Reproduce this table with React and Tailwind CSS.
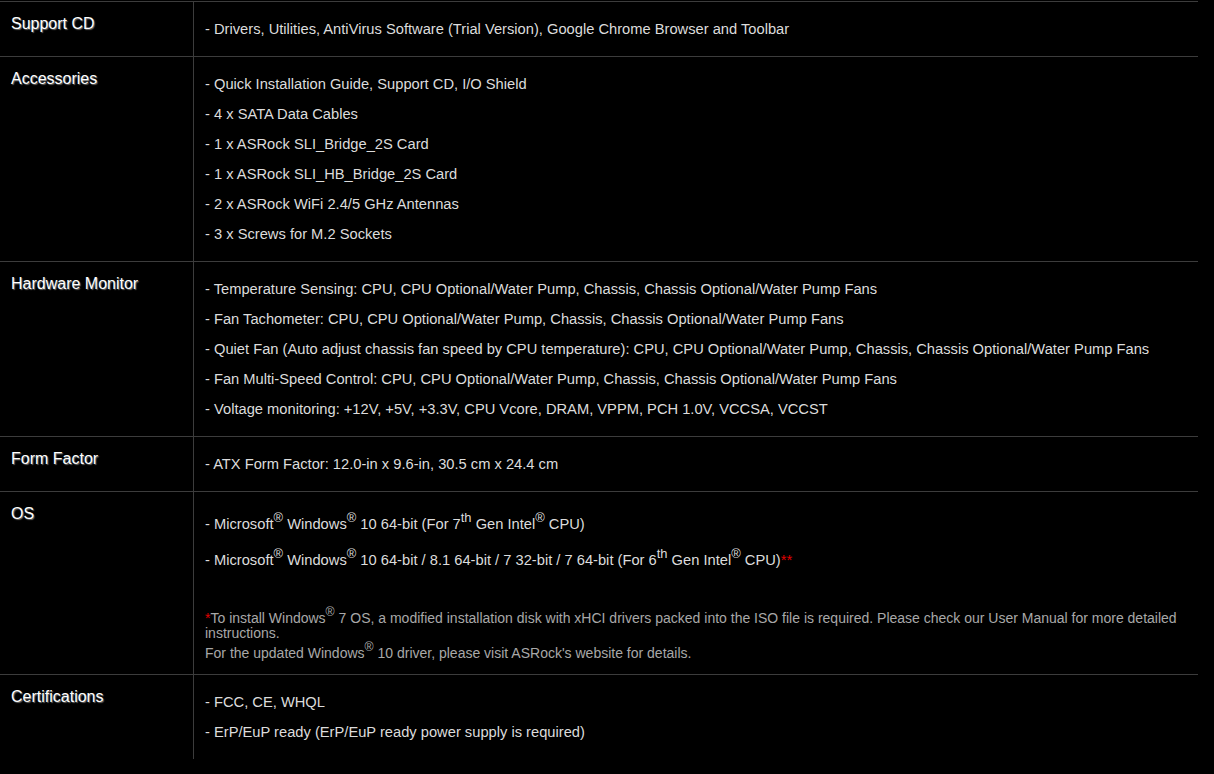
const specs = [
  {
    label: "Support CD",
    items: [
      "- Drivers, Utilities, AntiVirus Software (Trial Version), Google Chrome Browser and Toolbar",
    ],
  },
  {
    label: "Accessories",
    items: [
      "- Quick Installation Guide, Support CD, I/O Shield",
      "- 4 x SATA Data Cables",
      "- 1 x ASRock SLI_Bridge_2S Card",
      "- 1 x ASRock SLI_HB_Bridge_2S Card",
      "- 2 x ASRock WiFi 2.4/5 GHz Antennas",
      "- 3 x Screws for M.2 Sockets",
    ],
  },
  {
    label: "Hardware Monitor",
    items: [
      "- Temperature Sensing: CPU, CPU Optional/Water Pump, Chassis, Chassis Optional/Water Pump Fans",
      "- Fan Tachometer: CPU, CPU Optional/Water Pump, Chassis, Chassis Optional/Water Pump Fans",
      "- Quiet Fan (Auto adjust chassis fan speed by CPU temperature): CPU, CPU Optional/Water Pump, Chassis, Chassis Optional/Water Pump Fans",
      "- Fan Multi-Speed Control: CPU, CPU Optional/Water Pump, Chassis, Chassis Optional/Water Pump Fans",
      "- Voltage monitoring: +12V, +5V, +3.3V, CPU Vcore, DRAM, VPPM, PCH 1.0V, VCCSA, VCCST",
    ],
  },
  {
    label: "Form Factor",
    items: ["- ATX Form Factor: 12.0-in x 9.6-in, 30.5 cm x 24.4 cm"],
  },
];

function Sup({ children }) {
  return <sup className="text-[0.88em] top-[-0.55em]">{children}</sup>;
}

function Row({ label, children }) {
  return (
    <div className="grid grid-cols-[193px_1fr] border-t border-[#3c3c3c]">
      <div className="pt-[12px] pl-[11px] text-[16px] leading-[20px] text-white [text-shadow:1px_1px_1px_#6a6a6a]">
        {label}
      </div>
      <div className="border-l border-[#3c3c3c] pl-[11px] pr-3">{children}</div>
    </div>
  );
}

function Items({ items }) {
  return (
    <div className="pt-[12px] pb-[12px]">
      {items.map((t) => (
        <div key={t} className="leading-[30px]">
          {t}
        </div>
      ))}
    </div>
  );
}

export default function App() {
  return (
    <div className="min-h-screen bg-black pt-[1px] font-['Liberation_Sans',Arial,sans-serif] text-[14.7px] text-[#dcdcdc]">
      <div className="w-[1198px]">
        {specs.map((s) => (
          <Row key={s.label} label={s.label}>
            <Items items={s.items} />
          </Row>
        ))}

        <Row label="OS">
          <div className="pt-[14px] pb-[11px]">
            <div className="leading-[36px]">
              - Microsoft<Sup>®</Sup> Windows<Sup>®</Sup> 10 64-bit (For 7<Sup>th</Sup> Gen Intel<Sup>®</Sup> CPU)
            </div>
            <div className="leading-[36px]">
              - Microsoft<Sup>®</Sup> Windows<Sup>®</Sup> 10 64-bit / 8.1 64-bit / 7 32-bit / 7 64-bit (For 6<Sup>th</Sup> Gen Intel<Sup>®</Sup> CPU)
              <span className="text-[#e00000]">**</span>
            </div>
            <div className="mt-[33px] pr-2 text-[14px] leading-[15px] text-[#a8a8a8]">
              <span className="text-[#e00000]">*</span>To install Windows<Sup>®</Sup> 7 OS, a modified installation disk with xHCI drivers packed into the ISO file is required. Please check our User Manual for more detailed instructions.
            </div>
            <div className="mt-[2px] text-[14px] leading-[20px] text-[#a8a8a8]">
              For the updated Windows<Sup>®</Sup> 10 driver, please visit ASRock's website for details.
            </div>
          </div>
        </Row>

        <Row label="Certifications">
          <Items items={["- FCC, CE, WHQL", "- ErP/EuP ready (ErP/EuP ready power supply is required)"]} />
        </Row>
      </div>
    </div>
  );
}
